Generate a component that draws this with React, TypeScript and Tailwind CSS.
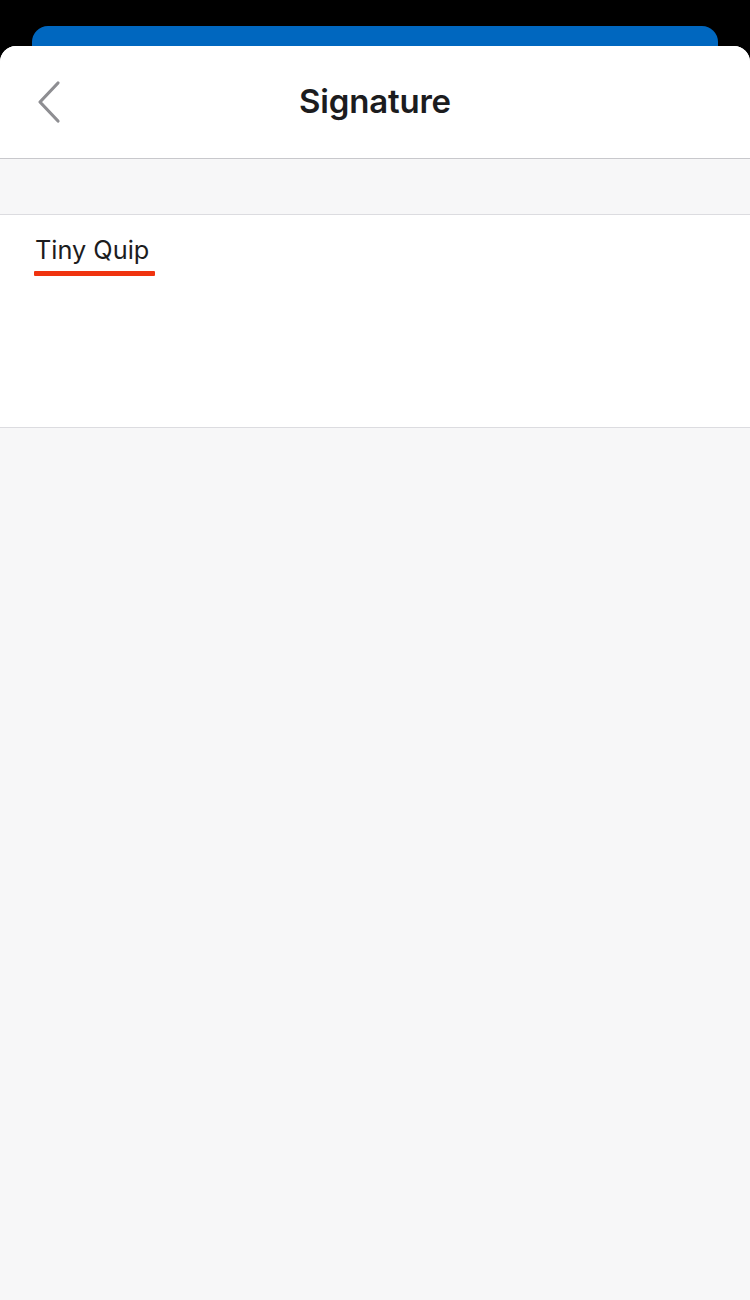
const App = () => {
  return (
    <main
      className="w-[750px] h-[1300px] bg-black overflow-hidden flex flex-col"
      style={{ fontFamily: "Inter, 'Noto Sans', sans-serif" }}
    >
      <div className="h-[46px] pt-[26px] px-[32px] shrink-0">
        <div className="h-[20px] bg-[#0067bf] rounded-t-[16px]" />
      </div>

      <section className="flex-1 bg-[#f7f7f8] rounded-t-[16px] overflow-hidden flex flex-col">
        <header className="relative h-[113px] bg-white border-b border-[#c8c8cc] flex items-center justify-center shrink-0">
          <button className="absolute left-[34px] top-[34px] w-[30px] h-[44px] flex items-center justify-center">
            <svg width="26" height="44" viewBox="0 0 26 44" fill="none">
              <path
                d="M22 3 L4 22 L22 41"
                stroke="#8e8e92"
                strokeWidth="3.2"
                strokeLinecap="round"
                strokeLinejoin="round"
              />
            </svg>
          </button>
          <h1 className="text-[33px] font-semibold text-[#1c1c1e] tracking-[-0.2px]">Signature</h1>
        </header>

        <div className="h-[56px] bg-[#f7f7f8] border-b border-[#dcdce0] shrink-0" />

        <div className="h-[213px] bg-white border-b border-[#dcdce0] pl-[35px] pt-[19px] shrink-0">
          <p className="inline-block text-[25.3px] leading-[32px] text-[#1c1c1e]">Tiny Quip</p>
          <div className="w-[121px] h-[5px] -ml-[1px] mt-[5px] bg-[#f0330f] rounded-[1px]" />
        </div>
      </section>
    </main>
  );
};

export default App;
